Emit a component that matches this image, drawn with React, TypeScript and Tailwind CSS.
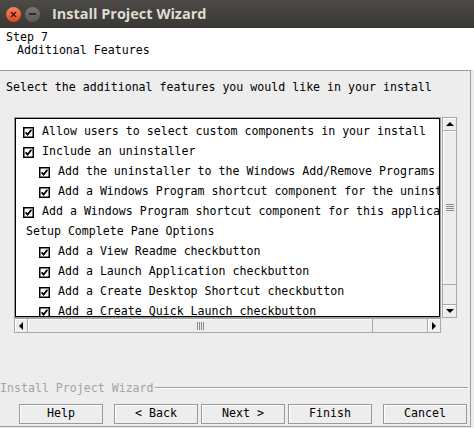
import React from "react";

const mono = { fontFamily: '"DejaVu Sans Mono", "Liberation Mono", monospace' };

type Row = { text: string; level: 0 | 1; check: boolean };

const rows: Row[] = [
  { text: "Allow users to select custom components in your install", level: 0, check: true },
  { text: "Include an uninstaller", level: 0, check: true },
  { text: "Add the uninstaller to the Windows Add/Remove Programs", level: 1, check: true },
  { text: "Add a Windows Program shortcut component for the uninstaller", level: 1, check: true },
  { text: "Add a Windows Program shortcut component for this application", level: 0, check: true },
  { text: "Setup Complete Pane Options", level: 0, check: false },
  { text: "Add a View Readme checkbutton", level: 1, check: true },
  { text: "Add a Launch Application checkbutton", level: 1, check: true },
  { text: "Add a Create Desktop Shortcut checkbutton", level: 1, check: true },
  { text: "Add a Create Quick Launch checkbutton", level: 1, check: true },
];

const CheckBox = () => (
  <svg width="11" height="11" viewBox="0 0 11 11" className="shrink-0">
    <rect x="0.75" y="0.75" width="9.5" height="9.5" fill="#fff" stroke="#000" strokeWidth="1.5" />
    <polyline points="2.6,5.4 4.6,7.6 8.4,2.8" fill="none" stroke="#000" strokeWidth="1.8" />
  </svg>
);

const Arrow = ({ dir }: { dir: "up" | "down" | "left" | "right" }) => {
  const pts = {
    up: "0,5 4,1 8,5",
    down: "0,1 8,1 4,5",
    left: "5,0 5,8 1,4",
    right: "1,0 1,8 5,4",
  }[dir];
  const vert = dir === "up" || dir === "down";
  return (
    <svg width={vert ? 8 : 6} height={vert ? 6 : 8} viewBox={vert ? "0 0 8 6" : "0 0 6 8"}>
      <polygon points={pts} fill="#000" />
    </svg>
  );
};

const WinButton = ({ label, className = "" }: { label: string; className?: string }) => (
  <div
    className={`w-[84px] h-[20px] border border-[#9a9a9a] bg-[#ededed] shadow-[inset_1px_1px_0_#ffffff] flex items-center justify-center text-[11.6px] text-black ${className}`}
  >
    {label}
  </div>
);

export default function App() {
  return (
    <div className="w-[474px] h-[428px] bg-[#ededed] overflow-hidden flex flex-col text-black" style={mono}>
      {/* title bar */}
      <div className="h-[28px] shrink-0 bg-gradient-to-b from-[#4b4a46] to-[#393834] flex items-center">
        <div className="ml-[6px] w-[15px] h-[15px] rounded-full bg-gradient-to-b from-[#f5845c] to-[#dd4814] flex items-center justify-center">
          <svg width="7" height="7" viewBox="0 0 7 7">
            <path d="M1 1 L6 6 M6 1 L1 6" stroke="#3a1a0c" strokeWidth="1.4" />
          </svg>
        </div>
        <div className="ml-[4px] w-[15px] h-[15px] rounded-full bg-gradient-to-b from-[#77766f] to-[#5b5a55] flex items-center justify-center">
          <div className="w-[7px] h-[1.5px] bg-[#2e2d2a]" />
        </div>
        <div
          className="ml-[12px] text-[14.5px] font-bold text-[#dfdbd2]"
          style={{ fontFamily: '"Open Sans", "DejaVu Sans", sans-serif' }}
        >
          Install Project Wizard
        </div>
      </div>

      {/* header */}
      <div className="h-[42px] shrink-0 bg-white pt-[3px] text-[11.6px] leading-[13px]">
        <div className="pl-[6px]">Step 7</div>
        <div className="pl-[17px]">Additional Features</div>
      </div>

      {/* main frame */}
      <div className="w-[471px] h-[357px] shrink-0 border-t border-r border-b border-[#9c9c9c] flex flex-col">
        <div className="mt-[9px] pl-[6px] h-[14px] leading-[14px] text-[11.6px]">
          Select the additional features you would like in your install
        </div>

        <div className="mt-[23px] ml-[14px] flex">
          {/* listbox */}
          <div className="w-[427px] h-[201px] border border-[#9a9a9a]">
            <div className="w-full h-full border border-black bg-white overflow-hidden pt-[3px]">
              {rows.map((r, i) => (
                <div
                  key={i}
                  className={`h-[20px] flex items-center whitespace-nowrap text-[11.6px] ${
                    r.check ? (r.level === 0 ? "pl-[7px]" : "pl-[23px]") : "pl-[10px]"
                  }`}
                >
                  {r.check && <CheckBox />}
                  <span className={r.check ? "ml-[8px]" : ""}>{r.text}</span>
                </div>
              ))}
            </div>
          </div>
          {/* vertical scrollbar */}
          <div className="ml-[1px] w-[15px] h-[201px] border border-[#a8a8a8] flex flex-col">
            <div className="h-[13px] border-b border-[#a8a8a8] flex items-center justify-center shadow-[inset_1px_1px_0_#ffffff]">
              <Arrow dir="up" />
            </div>
            <div className="h-[154px] border-b border-[#a8a8a8] flex flex-col items-center justify-center gap-[1px] shadow-[inset_1px_1px_0_#ffffff]">
              <div className="w-[8px] h-[1px] bg-[#8a8a8a]" />
              <div className="w-[8px] h-[1px] bg-[#8a8a8a]" />
              <div className="w-[8px] h-[1px] bg-[#8a8a8a]" />
              <div className="w-[8px] h-[1px] bg-[#8a8a8a]" />
            </div>
            <div className="flex-1" />
            <div className="h-[13px] border-t border-[#a8a8a8] flex items-center justify-center shadow-[inset_1px_1px_0_#ffffff]">
              <Arrow dir="down" />
            </div>
          </div>
        </div>

        {/* horizontal scrollbar */}
        <div className="ml-[14px] w-[427px] h-[15px] border border-[#a8a8a8] flex">
          <div className="w-[13px] border-r border-[#a8a8a8] flex items-center justify-center shadow-[inset_1px_1px_0_#ffffff]">
            <Arrow dir="left" />
          </div>
          <div className="w-[345px] border-r border-[#a8a8a8] flex items-center justify-center gap-[1px] shadow-[inset_1px_1px_0_#ffffff]">
            <div className="w-[1px] h-[8px] bg-[#8a8a8a]" />
            <div className="w-[1px] h-[8px] bg-[#8a8a8a]" />
            <div className="w-[1px] h-[8px] bg-[#8a8a8a]" />
            <div className="w-[1px] h-[8px] bg-[#8a8a8a]" />
          </div>
          <div className="flex-1" />
          <div className="w-[13px] border-l border-[#a8a8a8] flex items-center justify-center shadow-[inset_1px_1px_0_#ffffff]">
            <Arrow dir="right" />
          </div>
        </div>

        {/* labelled separator */}
        <div className="mt-[48px] h-[14px] flex items-center">
          <span className="text-[11.6px] leading-[14px] text-[#a3a3a3] whitespace-nowrap">Install Project Wizard</span>
          <div className="ml-[1px] w-[313px] h-[2px] border-t border-[#a0a0a0] border-b border-b-white" />
        </div>

        {/* buttons */}
        <div className="mt-[9px] pl-[19px] flex">
          <WinButton label="Help" />
          <WinButton label="< Back" className="ml-[11px]" />
          <WinButton label="Next >" className="ml-[3px]" />
          <WinButton label="Finish" className="ml-[3px]" />
          <WinButton label="Cancel" className="ml-[11px]" />
        </div>
      </div>
    </div>
  );
}
